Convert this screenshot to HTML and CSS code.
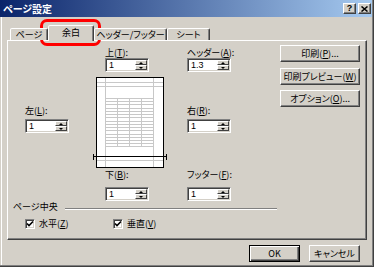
FILE: index.html
```html
<!DOCTYPE html>
<html lang="ja">
<head>
<meta charset="utf-8">
<title>ページ設定</title>
<link rel="stylesheet" href="styles.css">
</head>
<body>
<div class="window">
  <div class="titlebar">
    <span class="title">ページ設定</span>
    <div class="tb-buttons">
      <span class="tb-btn tb-help">?</span>
      <span class="tb-btn"><svg width="7" height="6" viewBox="0 0 7 6"><path d="M0.5 0.5L6.5 5.5M6.5 0.5L0.5 5.5" stroke="#000" stroke-width="1.5"/></svg></span>
    </div>
  </div>
  <div class="content">
    <div class="tabs">
      <div class="tab t1">ページ</div>
      <div class="tab t2 active">余白</div>
      <div class="tab t3">ヘッダー/フッター</div>
      <div class="tab t4">シート</div>
    </div>
    <div class="panel">
      <div class="margins">
        <div class="col col-left">
          <span class="lbl">左(<u>L</u>):</span>
          <div class="spin sp-mid"><span class="val">1</span><span class="arrows"><i class="ab"><b class="up"></b></i><i class="ab"><b class="dn"></b></i></span></div>
        </div>
        <div class="col col-mid">
          <div class="indent">
            <span class="lbl">上(<u>T</u>):</span>
            <div class="spin"><span class="val">1</span><span class="arrows"><i class="ab"><b class="up"></b></i><i class="ab"><b class="dn"></b></i></span></div>
          </div>
          <svg class="preview" width="68" height="91" viewBox="0 0 68 91">
            <rect x="0.5" y="0.5" width="67" height="90" fill="#fff" stroke="#000"/>
            <g stroke="#C8C8C8" shape-rendering="crispEdges">
              <line x1="9.5" y1="1" x2="9.5" y2="90"/>
              <line x1="57.5" y1="1" x2="57.5" y2="90"/>
              <line x1="1" y1="5.5" x2="67" y2="5.5"/>
              <line x1="1" y1="9.5" x2="67" y2="9.5"/>
              <line x1="1" y1="83.5" x2="67" y2="83.5"/>
              <line x1="21.5" y1="21" x2="21.5" y2="70"/>
              <line x1="33.5" y1="21" x2="33.5" y2="70"/>
              <line x1="45.5" y1="21" x2="45.5" y2="70"/>
              <line x1="9" y1="21.5" x2="58" y2="21.5"/>
              <line x1="9" y1="24.5" x2="58" y2="24.5"/>
              <line x1="9" y1="27.5" x2="58" y2="27.5"/>
              <line x1="9" y1="31.5" x2="58" y2="31.5"/>
              <line x1="9" y1="34.5" x2="58" y2="34.5"/>
              <line x1="9" y1="37.5" x2="58" y2="37.5"/>
              <line x1="9" y1="40.5" x2="58" y2="40.5"/>
              <line x1="9" y1="44.5" x2="58" y2="44.5"/>
              <line x1="9" y1="47.5" x2="58" y2="47.5"/>
              <line x1="9" y1="50.5" x2="58" y2="50.5"/>
              <line x1="9" y1="53.5" x2="58" y2="53.5"/>
              <line x1="9" y1="57.5" x2="58" y2="57.5"/>
              <line x1="9" y1="60.5" x2="58" y2="60.5"/>
              <line x1="9" y1="63.5" x2="58" y2="63.5"/>
              <line x1="9" y1="66.5" x2="58" y2="66.5"/>
              <line x1="9" y1="69.5" x2="58" y2="69.5"/>
            </g>
            <g shape-rendering="crispEdges">
              <line x1="-3" y1="79.5" x2="71" y2="79.5" stroke="#000"/>
              <rect x="-3" y="77" width="1" height="6" fill="#000"/>
              <rect x="70" y="77" width="1" height="6" fill="#000"/>
            </g>
          </svg>
          <div class="indent lower">
            <span class="lbl">下(<u>B</u>):</span>
            <div class="spin"><span class="val">1</span><span class="arrows"><i class="ab"><b class="up"></b></i><i class="ab"><b class="dn"></b></i></span></div>
          </div>
        </div>
        <div class="col col-right">
          <span class="lbl">ヘッダー(<u>A</u>):</span>
          <div class="spin"><span class="val">1.3</span><span class="arrows"><i class="ab"><b class="up"></b></i><i class="ab"><b class="dn"></b></i></span></div>
          <span class="lbl lbl-r">右(<u>R</u>):</span>
          <div class="spin sp-mid"><span class="val">1</span><span class="arrows"><i class="ab"><b class="up"></b></i><i class="ab"><b class="dn"></b></i></span></div>
          <span class="lbl lbl-f">フッター(<u>F</u>):</span>
          <div class="spin sp-low"><span class="val">1</span><span class="arrows"><i class="ab"><b class="up"></b></i><i class="ab"><b class="dn"></b></i></span></div>
        </div>
        <div class="col col-btns">
          <div class="btn"><span>印刷(<u>P</u>)...</span></div>
          <div class="btn b2"><span>印刷プレビュー(<u>W</u>)</span></div>
          <div class="btn b3"><span>オプション(<u>O</u>)...</span></div>
        </div>
      </div>
      <div class="group">
        <span class="legend">ページ中央</span>
        <span class="rule"></span>
      </div>
      <div class="checks">
        <label class="chk-item"><span class="chk"><svg width="8" height="8" viewBox="0 0 8 8"><path d="M1 3.5L3 5.5L7 1.5" fill="none" stroke="#000" stroke-width="1.6"/></svg></span><span class="chk-text">水平(<u>Z</u>)</span></label>
        <label class="chk-item"><span class="chk"><svg width="8" height="8" viewBox="0 0 8 8"><path d="M1 3.5L3 5.5L7 1.5" fill="none" stroke="#000" stroke-width="1.6"/></svg></span><span class="chk-text">垂直(<u>V</u>)</span></label>
      </div>
    </div>
    <div class="footer">
      <div class="btn btn-ok">OK</div>
      <div class="btn btn-cancel">キャンセル</div>
    </div>
  </div>
  <div class="highlight"></div>
</div>
</body>
</html>
```

FILE: styles.css
```css
* { box-sizing: border-box; }
html, body { margin: 0; padding: 0; }
body {
  width: 374px;
  height: 267px;
  overflow: hidden;
  background: #D4D0C8;
  font-family: "Noto Sans CJK JP", "Noto Sans", sans-serif;
  font-size: 9px;
  font-feature-settings: "palt";
  color: #000;
}
u { text-decoration: underline; text-underline-offset: 1px; }

.window {
  position: relative;
  width: 374px;
  height: 267px;
  background: #D4D0C8;
  border-right: 1px solid #404040;
  border-bottom: 1px solid #404040;
  box-shadow: inset -1px -1px #808080, inset 1px 0 #D4D0C8, inset 2px 0 #fff;
}

.titlebar {
  height: 17px;
  margin-right: 1px;
  padding-left: 3px;
  display: flex;
  align-items: center;
  background: linear-gradient(to right, #0A246A, #A6CAF0);
}
.title {
  color: #fff;
  font-weight: bold;
  font-size: 10px;
  line-height: 12px;
}
.tb-buttons {
  margin-left: auto;
  margin-right: 1px;
  display: flex;
  gap: 2px;
}
.tb-btn {
  width: 13px;
  height: 11px;
  background: #D4D0C8;
  border: 1px solid;
  border-color: #fff #404040 #404040 #fff;
  box-shadow: inset -1px -1px #808080;
  display: flex;
  align-items: center;
  justify-content: center;
  font-family: "Liberation Sans", sans-serif;
  font-weight: bold;
  font-size: 9px;
  line-height: 9px;
}

.content {
  padding: 8px 0 0 7px;
}

.tabs {
  display: flex;
  align-items: flex-end;
  height: 15px;
  padding-left: 3px;
  position: relative;
  z-index: 1;
}
.tab {
  height: 12px;
  line-height: 11px;
  text-align: center;
  white-space: nowrap;
  background: #D4D0C8;
  border: 1px solid;
  border-bottom: none;
  border-color: #fff #404040 transparent #fff;
  box-shadow: inset -1px 0 #808080;
  border-radius: 2px 2px 0 0;
}
.t1 { width: 38px; }
.t2 { width: 46px; }
.t3 { width: 73px; }
.t4 { width: 43px; }
.tab.active {
  height: 16px;
  line-height: 14px;
  margin-bottom: -1px;
}

.panel {
  width: 360px;
  height: 200px;
  border: 1px solid;
  border-color: #fff #404040 #404040 #fff;
  box-shadow: inset -1px -1px #808080;
}

.margins {
  display: flex;
  align-items: flex-start;
}
.col { display: flex; flex-direction: column; align-items: flex-start; }
.col-left { margin-left: 17px; width: 45px; padding-top: 65px; }
.col-mid { margin-left: 26px; width: 68px; padding-top: 7px; }
.col-right { margin-left: 23px; width: 45px; padding-top: 7px; }
.col-btns { margin-left: 48px; width: 80px; padding-top: 4px; }

.indent { padding-left: 9px; display: flex; flex-direction: column; }
.indent.lower { margin-top: 2px; }
.indent.lower .spin { margin-top: 7px; }

.lbl {
  display: block;
  height: 10px;
  line-height: 10px;
  white-space: nowrap;
}
.lbl-r { margin-top: 34px; }
.lbl-f { margin-top: 37px; }
.sp-mid { margin-top: 3px; }
.sp-low { margin-top: 7px; }

.spin {
  width: 44px;
  height: 14px;
  background: #fff;
  border: 1px solid;
  border-color: #808080 #fff #fff #808080;
  box-shadow: inset 1px 1px #404040, inset -1px -1px #D4D0C8;
  display: flex;
  padding: 1px;
}
.val {
  flex: 1;
  padding-left: 2px;
  font-family: "Liberation Sans", sans-serif;
  font-size: 9px;
  line-height: 11px;
}
.arrows {
  width: 12px;
  display: flex;
  flex-direction: column;
}
.ab {
  flex: 1;
  display: flex;
  align-items: center;
  justify-content: center;
  background: #D4D0C8;
  border: 1px solid;
  border-color: #fff #404040 #404040 #fff;
}
.up, .dn {
  width: 0;
  height: 0;
  border-left: 2px solid transparent;
  border-right: 2px solid transparent;
}
.up { border-bottom: 2px solid #000; }
.dn { border-top: 2px solid #000; }

.preview {
  display: block;
  margin-top: 5px;
  overflow: visible;
}

.btn {
  height: 17px;
  display: flex;
  align-items: center;
  justify-content: center;
  white-space: nowrap;
  background: #D4D0C8;
  border: 1px solid;
  border-color: #fff #404040 #404040 #fff;
  box-shadow: inset -1px -1px #808080;
  line-height: 10px;
}
.col-btns .btn { width: 80px; }
.b2 { margin-top: 6px; }
.b3 { margin-top: 5px; }

.group {
  margin-top: 1px;
  padding-left: 5px;
  height: 10px;
  display: flex;
  align-items: flex-start;
}
.legend { line-height: 10px; white-space: nowrap; }
.rule {
  width: 212px;
  height: 2px;
  margin-left: 7px;
  margin-top: 6px;
  border-top: 1px solid #808080;
  border-bottom: 1px solid #fff;
}

.checks {
  margin-top: 7px;
  padding-left: 17px;
  display: flex;
  height: 10px;
}
.chk-item {
  width: 88px;
  display: flex;
  align-items: center;
  gap: 4px;
  line-height: 10px;
  white-space: nowrap;
}
.chk {
  width: 10px;
  height: 10px;
  flex: none;
  background: #fff;
  border: 1px solid;
  border-color: #808080 #fff #fff #808080;
  box-shadow: inset 1px 1px #404040, inset -1px -1px #D4D0C8;
  display: flex;
  align-items: center;
  justify-content: center;
}
.chk svg { display: block; }

.footer {
  width: 360px;
  padding: 5px 7px 0 0;
  display: flex;
  justify-content: flex-end;
  gap: 9px;
}
.footer .btn { width: 51px; }
.btn-ok {
  border: 1px solid #000;
  box-shadow: inset 1px 1px #fff, inset -1px -1px #404040, inset -2px -2px #808080;
}

.highlight {
  position: absolute;
  left: 40px;
  top: 19px;
  width: 61px;
  height: 27px;
  border: 3px solid #FF0000;
  border-radius: 7px;
  pointer-events: none;
}
```
